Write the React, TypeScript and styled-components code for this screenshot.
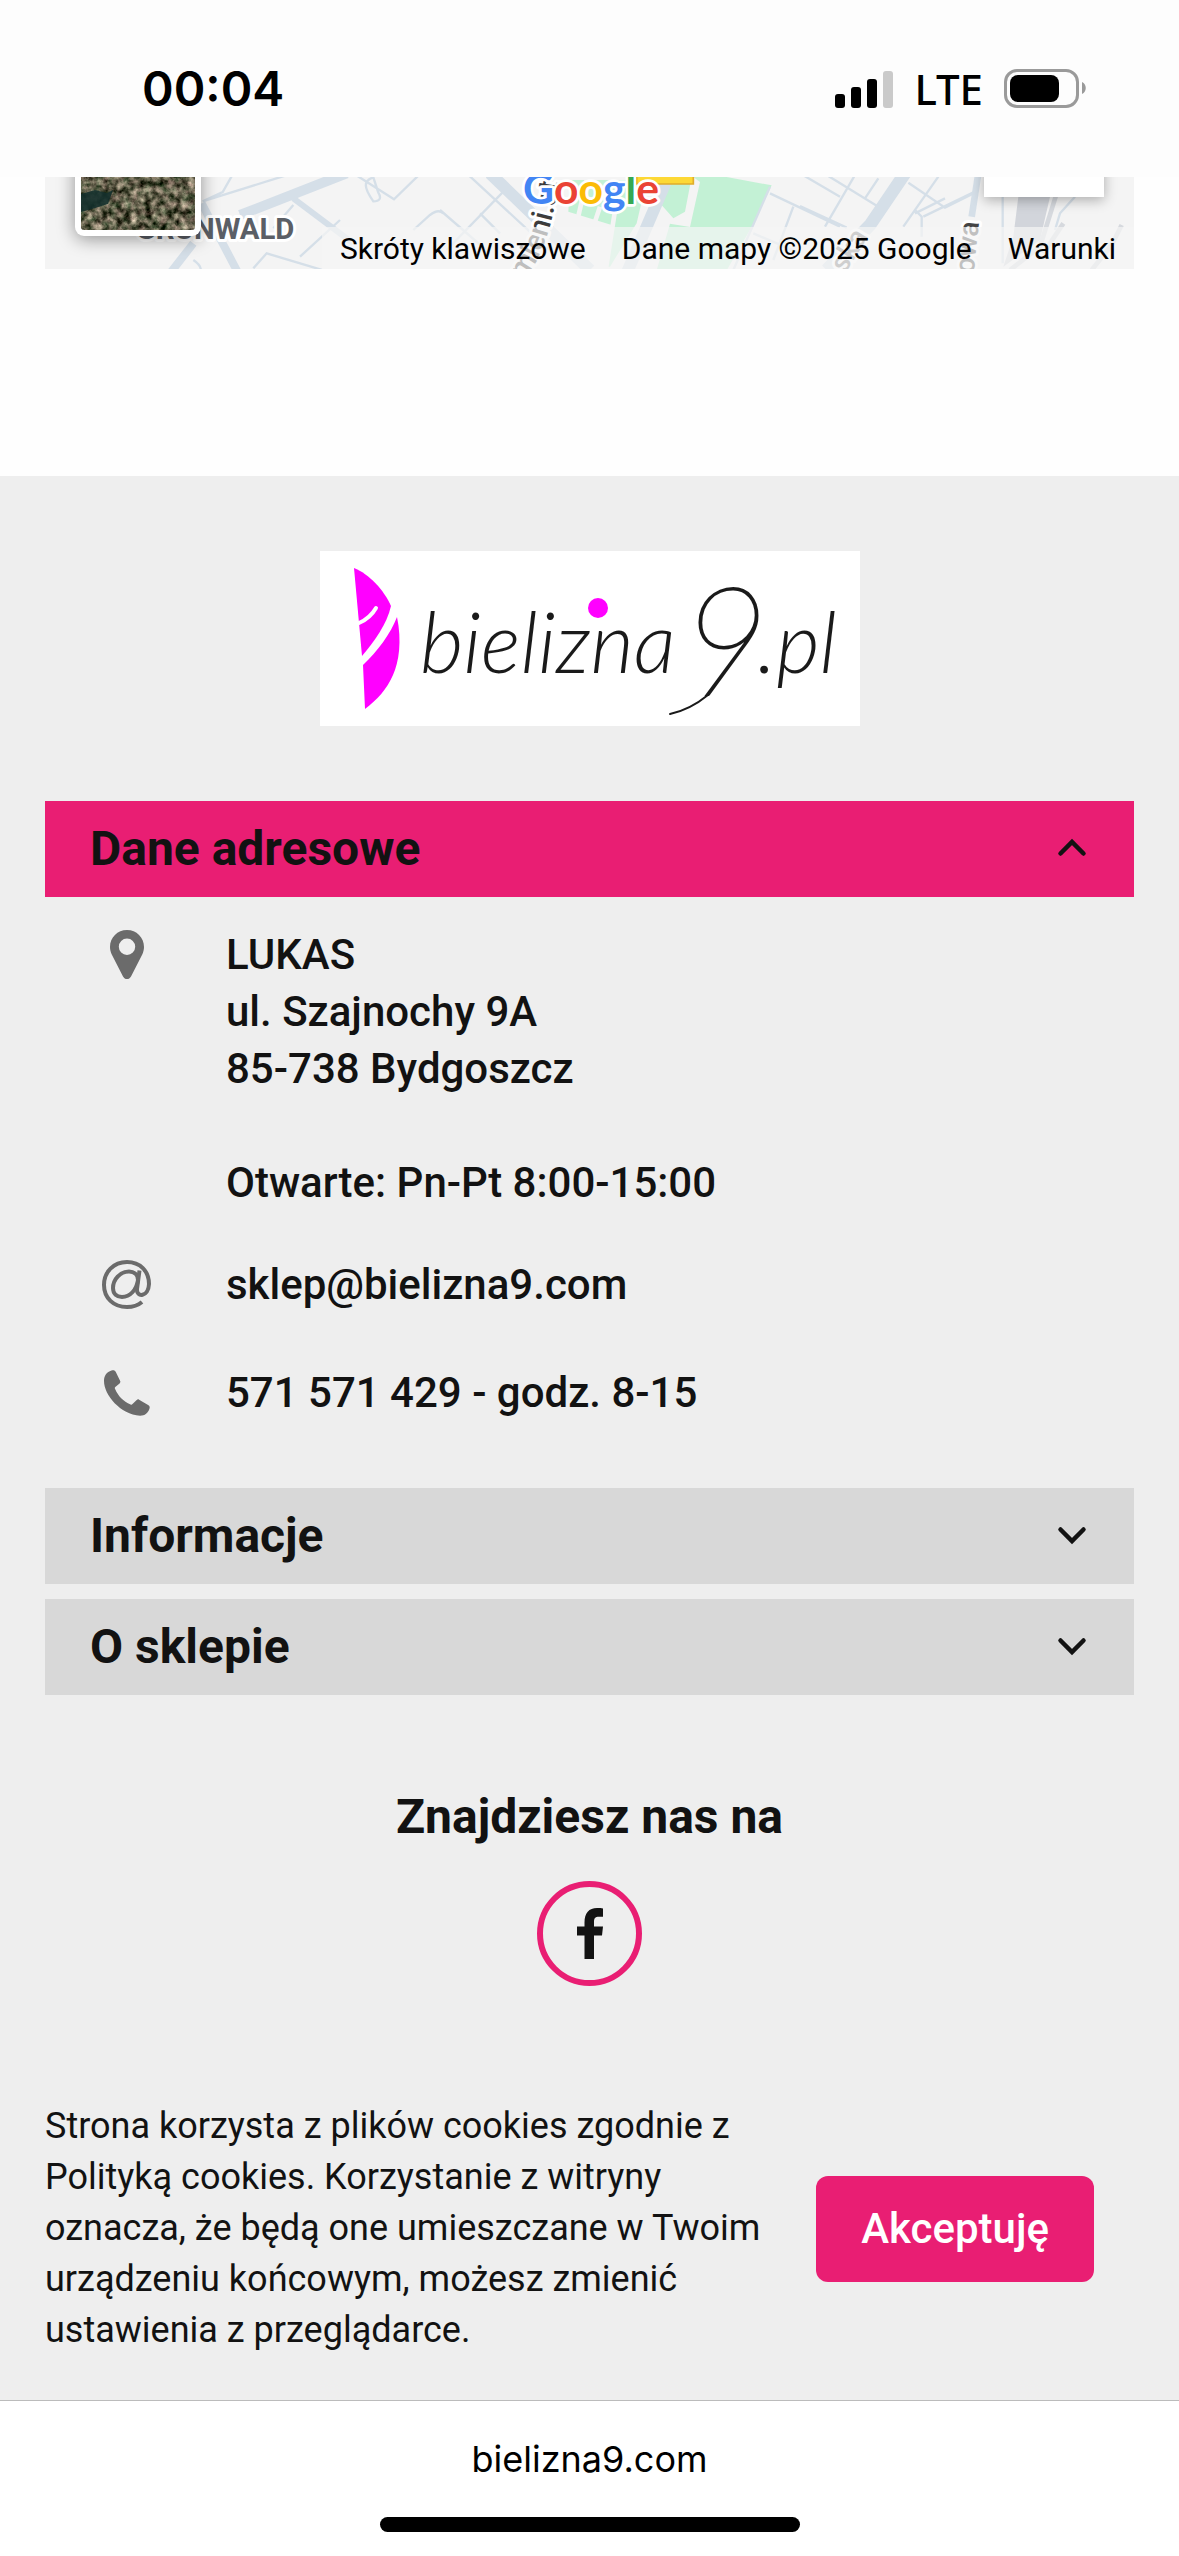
import React, { useState } from "react";
import styled, { createGlobalStyle } from "styled-components";

const pink = "#e91e73";
const ink = "#121212";
const roboto = `Roboto, "Noto Sans", sans-serif`;
const system = `Inter, "Noto Sans", sans-serif`;

const GlobalStyle = createGlobalStyle`
  *, *::before, *::after { box-sizing: border-box; }
  body { margin: 0; background: #fefefe; color: ${ink}; font-family: ${roboto}; }
  button { font-family: inherit; color: inherit; border: 0; cursor: pointer; }
  a { color: inherit; text-decoration: none; }
  h2, p, address { margin: 0; font-style: normal; }
`;

const Page = styled.div`
  display: flex;
  flex-direction: column;
  min-height: 100vh;
`;

const StatusBar = styled.header`
  display: flex;
  justify-content: space-between;
  align-items: center;
  height: 177px;
  padding: 0 92px 0 142px;
  background: #fdfdfd;
  color: #000;
  font-family: ${system};
`;

const Clock = styled.time`
  font-size: 48px;
  font-weight: 600;
  line-height: 60px;
`;

const StatusIcons = styled.div`
  display: flex;
  align-items: center;
  gap: 21px;
`;

const Network = styled.span`
  font-family: "Noto Sans", sans-serif;
  font-size: 42px;
  font-weight: 500;
  line-height: 48px;
`;

const Main = styled.main`
  padding: 0 45px 207px;
`;

const MapFrame = styled.section`
  position: relative;
  height: 92px;
  overflow: hidden;
  background: #f4f4f4;
`;

const MapDrawing = styled.svg`
  display: block;
  width: 100%;
  height: 100%;
`;

const SatelliteButton = styled.button`
  position: absolute;
  left: 30px;
  bottom: 33px;
  width: 126px;
  height: 126px;
  padding: 6px;
  border-radius: 9px;
  background: #fff;
  box-shadow: 0 3px 18px rgba(0, 0, 0, 0.4);
  svg { display: block; width: 100%; height: 100%; border-radius: 3px; }
`;

const ZoomButton = styled.button`
  position: absolute;
  right: 30px;
  bottom: 72px;
  width: 120px;
  height: 120px;
  background: #fff;
  box-shadow: 0 3px 12px rgba(0, 0, 0, 0.3);
`;

const Attribution = styled.div`
  position: absolute;
  right: 0;
  bottom: 0;
  display: flex;
  height: 42px;
  background: rgba(245, 245, 245, 0.7);
  color: #000;
  font-size: 30px;
  line-height: 44px;
  white-space: nowrap;
  > * { padding: 0 18px; }
`;

const ShortcutsButton = styled.button`
  background: none;
  font-size: 30px;
  line-height: 44px;
`;

const Footer = styled.footer`
  flex: 1;
  display: flex;
  flex-direction: column;
  padding: 75px 45px 44px;
  background: #eee;
`;

const LogoLink = styled.a`
  display: block;
  align-self: center;
  width: 540px;
  max-width: 100%;
  margin-bottom: 75px;
  background: #fff;
  svg { display: block; width: 100%; }
`;

const Accordion = styled.div`
  display: flex;
  flex-direction: column;
  gap: 15px;
`;

const PanelHeader = styled.button<{ $open: boolean }>`
  display: flex;
  justify-content: space-between;
  align-items: center;
  width: 100%;
  height: 96px;
  padding: 0 45px 2px;
  background: ${(p) => (p.$open ? pink : "#d8d8d8")};
  font-size: 48px;
  font-weight: 700;
  line-height: 57px;
  svg { width: 34px; height: 34px; transform: ${(p) => (p.$open ? "rotate(180deg)" : "none")}; }
`;

const ContactList = styled.div`
  display: flex;
  flex-direction: column;
  gap: 39px;
  padding: 29px 45px 46px;
`;

const ContactRow = styled.div<{ $multiline?: boolean }>`
  display: flex;
  align-items: ${(p) => (p.$multiline ? "flex-start" : "center")};
  gap: 63px;
  min-height: 69px;
  font-size: 42px;
  font-weight: 500;
  line-height: 57px;
`;

const ContactIcon = styled.span`
  display: flex;
  flex: none;
  justify-content: center;
  align-items: center;
  width: 73px;
  height: 57px;
  color: #6b6b6b;
`;

const Social = styled.section`
  display: flex;
  flex-direction: column;
  align-items: center;
  gap: 36px;
  padding: 93px 0 115px;
`;

const SocialTitle = styled.h2`
  font-size: 48px;
  font-weight: 700;
  line-height: 57px;
`;

const SocialLink = styled.a`
  display: flex;
  justify-content: center;
  align-items: center;
  width: 105px;
  height: 105px;
  border: 6px solid ${pink};
  border-radius: 50%;
`;

const CookieBar = styled.section`
  display: flex;
  align-items: center;
  justify-content: space-between;
  gap: 45px;
  padding-right: 40px;
`;

const CookieText = styled.p`
  flex: 1;
  font-size: 36px;
  line-height: 51px;
`;

const AcceptButton = styled.button`
  flex: none;
  height: 106px;
  padding: 0 45px;
  border-radius: 12px;
  background: ${pink};
  color: #fff;
  font-size: 42px;
  font-weight: 500;
`;

const BrowserBar = styled.nav`
  display: flex;
  flex-direction: column;
  align-items: center;
  justify-content: space-between;
  height: 156px;
  padding: 34px 0 24px;
  border-top: 1px solid #bbb;
  background: #fff;
  color: #000;
  font-family: ${system};
  font-size: 36px;
  line-height: 48px;
`;

const HomeIndicator = styled.div`
  width: 420px;
  height: 15px;
  border-radius: 8px;
  background: #000;
`;

const SignalIcon = () => (
  <svg width="58" height="38" viewBox="0 0 58 38" aria-hidden="true">
    <rect x="0" y="24" width="10" height="14" rx="3" />
    <rect x="16" y="17" width="10" height="21" rx="3" />
    <rect x="32" y="9" width="10" height="29" rx="3" />
    <rect x="48" y="1" width="10" height="37" rx="3" fill="#cacaca" />
  </svg>
);

const BatteryIcon = () => (
  <svg width="83" height="39" viewBox="0 0 83 39" aria-hidden="true">
    <rect x="1.5" y="1.5" width="72" height="36" rx="11.5" fill="none" stroke="#9a9a9a" strokeWidth="3" />
    <rect x="6" y="6" width="49" height="27" rx="8" />
    <path d="M78 13c5 2 5 10 0 12z" fill="#9a9a9a" />
  </svg>
);

const Chevron = () => (
  <svg viewBox="0 0 34 34" aria-hidden="true">
    <path d="M5.500 11.500 17 23 28.500 11.500" fill="none" stroke={ink} strokeWidth="4.500" strokeLinecap="round" />
  </svg>
);

const PinIcon = () => (
  <svg width="34" height="50" viewBox="0 0 34 50" fill="currentColor" aria-hidden="true">
    <path fillRule="evenodd" d="M17 0C7.500 0 0 7.500 0 17c0 2.500.6 4.800 1.500 7L13 46.500c1.800 3.400 6.200 3.400 8 0L32.500 24c.9-2.200 1.500-4.500 1.500-7C34 7.500 26.500 0 17 0zm0 8.500a8.200 8.200 0 1 1 0 16.400 8.200 8.200 0 0 1 0-16.400z" />
  </svg>
);

const MailIcon = () => (
  <svg width="49" height="49" viewBox="0 0 49 49" fill="none" stroke="currentColor" strokeWidth="4" aria-hidden="true">
    <path d="M37.500 10.500 35 29c-.8 9 11.500 8 12-5C47 11 38 2 25 2 11.500 2 2 12 2 25s9.500 22 23 22c6 0 11-1.600 15-5" />
    <path d="M36 20c0-5.500-4-8.500-9-8.500-9 0-16 8-16 16.500 0 6 4 9 9 9 8 0 14.500-7 16-17z" />
  </svg>
);

const PhoneIcon = () => (
  <svg width="46" height="46" viewBox="0 0 46 46" fill="currentColor" aria-hidden="true">
    <path d="M7.500.6C9.500-.2 11 .4 11.800 2l4.400 9c.4 1 .1 1.700-.6 2.400L11.300 17c-.6.600-.6 1.100-.3 1.800 3.100 7.300 8.300 12.700 15.600 15.800.8.4 1.300.2 1.900-.5l4.200-4.100c.7-.7 1.500-.9 2.400-.3l9 5.200c1.500.8 1.900 2 1.400 3.600-1.400 4.600-4.600 7.200-9.400 7.200C16.500 44.500 0 25 0 11 0 5.600 2.700 2.300 7.500.6z" />
  </svg>
);

const FacebookIcon = () => (
  <svg width="26" height="51" viewBox="0 0 26 51" fill={ink} aria-hidden="true">
    <path d="M7.500 51V27.500H0v-9h7.500v-4C7.500 5 12 0 20 0c2.500 0 4.500.1 6 .4v8.300h-4c-4 0-5 1.800-5 5.300v4.500h9l-1 9h-8V51z" />
  </svg>
);

const Logo = () => (
  <svg viewBox="0 0 540 175" role="img" aria-label="bielizna9.pl">
    <g fill="#f0f">
      <path d="M34 17c15 6 30 22 37 38-4 18-17 36-29 50z" />
      <path d="M77 66c5 24 2 45-4 58-6 14-16 25-28 34l-2-44c14-13 28-32 34-48z" />
      <circle cx="278" cy="57" r="10" />
    </g>
    <path d="M39 72c7-3 13-8 17-15" fill="none" stroke="#fff" strokeWidth="4" strokeLinecap="round" />
    <g fill="#1a1a1a" fontFamily="Lato, sans-serif" fontStyle="italic" fontWeight="300">
      <text x="100" y="122" fontSize="84">bielizna</text>
      <text x="362" y="144" fontSize="150" fontWeight="200" stroke="#1a1a1a" strokeWidth="2">9</text>
      <text x="437" y="122" fontSize="84">.pl</text>
    </g>
    <path d="M388 144c-11 9-24 16-38 19" fill="none" stroke="#1a1a1a" strokeWidth="2" strokeLinecap="round" />
  </svg>
);

const StreetMap = () => (
  <MapDrawing viewBox="0 0 3267 276" preserveAspectRatio="xMidYMid slice" aria-hidden="true">
    <g transform="translate(-15 -51)">
      <g fill="none" stroke="#d5dfe8">
        <path d="M600 165 920 40" strokeWidth="30" />
        <path d="M460 250 390 340M485 130l110 210" strokeWidth="24" />
        <path d="M760 115 940 250" strokeWidth="18" />
        <path d="M580 40 548 96l-60 28 270-84M700 205l60-70M640 325l40-45 200 60M780 290l120-110M460 300q30 20 20 40M940 40l122 78 80-78M1000 52c-30 10-30 30 0 72 20 0 25-10 15-26zM1120 210l50-45q25-20 40-5" strokeWidth="7" />
      </g>
    </g>
    <g transform="translate(1185 -51)">
      <path d="M760 51h100l135 25-60 125-75 130H650l40-140 60 10 30-135zM660 130l40 45 35-20 20-104h-80zM390 60l230 0-30 130-80 130h-15l20-125-130-40z" fill="#c3f1d5" />
      <path d="M440 60l-30 130 50 10 20-60M530 120l-32 205" stroke="#f4f4f4" strokeWidth="14" fill="none" />
      <g fill="none" stroke="#d5dfe8">
        <path d="M150 40 450 330M680 60 620 200 560 340" strokeWidth="36" />
        <path d="M0 150l150 130M80 40l260 240M190 95 20 270M120 160l60 60M990 100l210 100M1060 140l-60 160M1080 40l120 70M990 80 880 330M940 220l140 60" strokeWidth="7" />
      </g>
      <path d="M590 40h170v32H590z" fill="#fdd835" stroke="#e0ac2b" strokeWidth="5" />
    </g>
    <g transform="translate(2265 -51)">
      <g fill="none" stroke="#d5dfe8">
        <path d="M315 40 210 195 80 330" strokeWidth="38" />
        <path d="M535 40l-20 130" strokeWidth="20" />
        <path d="M80 45l155 95M165 45 75 200M235 55l-40 60M0 138l140 65M325 68l110 75 90-45M415 50 310 200M345 160l90-45M345 150l20 20v60M370 170l155-75M608 110v200M825 110l-45 50-15 50" strokeWidth="7" />
      </g>
      <path d="M655 110h95l-30 130-110 80 30-90z" fill="#d2d5db" />
      <path d="M770 100 720 260l-90 70M790 190l-60 90M965 195l-30 60-60 75" stroke="#d6d9de" strokeWidth="14" fill="none" />
    </g>
    <path id="street" d="M1435 310Q1530 200 1552 -80" fill="none" />
    <g stroke="#fff" strokeWidth="18" strokeLinejoin="round" paintOrder="stroke" fontFamily="Roboto, sans-serif" fontWeight="500">
      <text x="748" y="187" textAnchor="end" fontSize="88" fontWeight="700" fill="#5b5f66">GRUNWALD</text>
      <text fontSize="88" fill="#3c3c3c"><textPath href="#street">mieni.st</textPath></text>
      <text fontSize="84" fill="#777" transform="translate(2400 290) rotate(-58)">ska</text>
      <text fontSize="84" fill="#444" transform="translate(2786 290) rotate(-84)">owa</text>
    </g>
    <text x="1434" y="80" fontFamily="Lato, sans-serif" fontWeight="700" fontSize="128" stroke="#fff" strokeWidth="16" strokeLinejoin="round" paintOrder="stroke">
      <tspan fill="#4285f4">G</tspan><tspan fill="#ea4335">o</tspan><tspan fill="#fbbc05">o</tspan><tspan fill="#4285f4">g</tspan><tspan fill="#34a853">l</tspan><tspan fill="#ea4335">e</tspan>
    </text>
  </MapDrawing>
);

const SatelliteThumb = () => (
  <svg viewBox="0 0 114 114" aria-hidden="true">
    <filter id="terrain" x="0" y="0" width="100%" height="100%" colorInterpolationFilters="sRGB">
      <feTurbulence type="fractalNoise" baseFrequency="0.14" numOctaves="4" seed="8" />
      <feColorMatrix values="1.1 0.4 0 0 -0.37  0.9 0.5 0 0 -0.33  0.9 0.4 0 0 -0.36  0 0 0 0 1" />
    </filter>
    <rect width="114" height="114" filter="url(#terrain)" />
    <path d="M0 78l14-4 12 3 6 -3-5 14-16 5-11 3z" fill="#14302c" opacity="0.9" />
  </svg>
);

interface PanelProps {
  title: string;
  initiallyOpen?: boolean;
  children?: React.ReactNode;
}

const Panel = ({ title, initiallyOpen = false, children }: PanelProps) => {
  const [open, setOpen] = useState(initiallyOpen);
  return (
    <div>
      <PanelHeader type="button" $open={open} aria-expanded={open} onClick={() => setOpen(!open)}>
        {title}
        <Chevron />
      </PanelHeader>
      {open && children}
    </div>
  );
};

export default function App() {
  return (
    <Page>
      <GlobalStyle />
      <StatusBar>
        <Clock>00:04</Clock>
        <StatusIcons>
          <SignalIcon />
          <Network>LTE</Network>
          <BatteryIcon />
        </StatusIcons>
      </StatusBar>

      <Main>
        <MapFrame>
          <StreetMap />
          <SatelliteButton type="button" aria-label="Satelita">
            <SatelliteThumb />
          </SatelliteButton>
          <ZoomButton type="button" aria-label="Pomniejsz" />
          <Attribution>
            <ShortcutsButton type="button">Skróty klawiszowe</ShortcutsButton>
            <span>Dane mapy ©2025 Google</span>
            <a href="#warunki">Warunki</a>
          </Attribution>
        </MapFrame>
      </Main>

      <Footer>
        <LogoLink href="#home">
          <Logo />
        </LogoLink>

        <Accordion>
          <Panel title="Dane adresowe" initiallyOpen>
            <ContactList>
              <ContactRow $multiline>
                <ContactIcon><PinIcon /></ContactIcon>
                <address>
                  LUKAS<br />
                  ul. Szajnochy 9A<br />
                  85-738 Bydgoszcz<br />
                  <br />
                  Otwarte: Pn-Pt 8:00-15:00
                </address>
              </ContactRow>
              <ContactRow>
                <ContactIcon><MailIcon /></ContactIcon>
                <a href="mailto:sklep@bielizna9.com">sklep@bielizna9.com</a>
              </ContactRow>
              <ContactRow>
                <ContactIcon><PhoneIcon /></ContactIcon>
                <a href="tel:571571429">571 571 429 - godz. 8-15</a>
              </ContactRow>
            </ContactList>
          </Panel>
          <Panel title="Informacje" />
          <Panel title="O sklepie" />
        </Accordion>

        <Social>
          <SocialTitle>Znajdziesz nas na</SocialTitle>
          <SocialLink href="#facebook" aria-label="Facebook">
            <FacebookIcon />
          </SocialLink>
        </Social>

        <CookieBar>
          <CookieText>
            Strona korzysta z plików cookies zgodnie z <a href="#cookies">Polityką cookies</a>. Korzystanie z witryny
            oznacza, że będą one umieszczane w Twoim urządzeniu końcowym, możesz zmienić ustawienia z przeglądarce.
          </CookieText>
          <AcceptButton type="button">Akceptuję</AcceptButton>
        </CookieBar>
      </Footer>

      <BrowserBar>
        <span>bielizna9.com</span>
        <HomeIndicator />
      </BrowserBar>
    </Page>
  );
}
